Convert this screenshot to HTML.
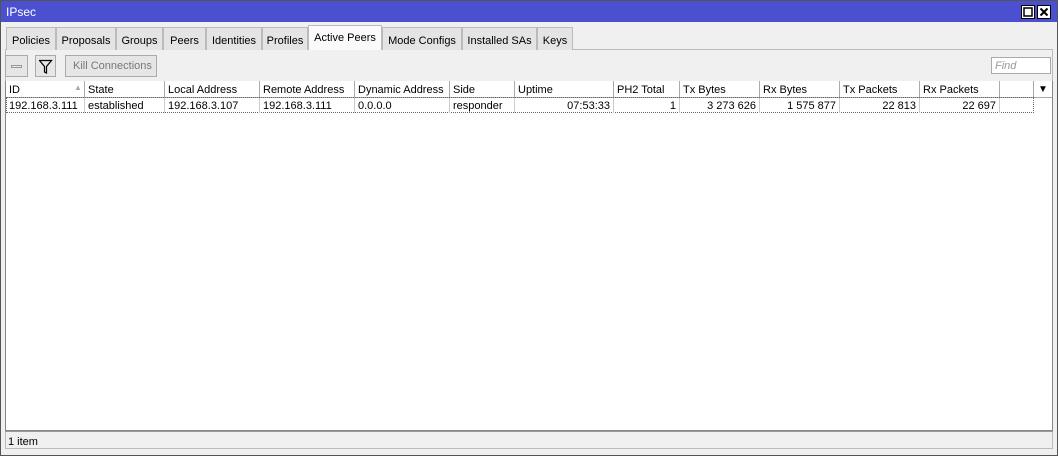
<!DOCTYPE html>
<html><head><style>
*{margin:0;padding:0;box-sizing:border-box}
body{width:1058px;height:456px;background:#f0f0f0;font-family:"Liberation Sans",sans-serif;font-size:11px;color:#000;position:relative;overflow:hidden}
.a{position:absolute}
#win{left:0;top:0;width:1058px;height:456px;border:1px solid #555;background:#f0f0f0}
#title{left:1px;top:1px;width:1056px;height:21px;background:#4b50d0;color:#fff;font-size:12px;padding:4px 0 0 5px}
.wb{top:5px;width:14px;height:14px;border:1px solid #000;background:#fff}
.tab{top:27px;height:23px;border:1px solid #bbb;border-bottom:none;background:#e4e4e4;padding:7px 0 0 0;text-align:center}
.tab.act{top:25px;height:25px;background:#fafafa;padding-top:6px}
#panel{left:5px;top:49px;width:1048px;height:400px;border:1px solid #bbb;background:#f0f0f0}
.btn{top:55px;height:22px;border:1px solid #aaa;background:#e6e6e6}
#grid{left:5px;top:81px;width:1048px;height:350px;border:1px solid #888;background:#fff}
.h{top:81px;height:17px;border-right:1px solid #aaa;border-bottom:1px solid #aaa;padding:3px 0 0 3px;background:#fff}
.c{top:98px;height:15px;padding:2px 3px 0 3px;white-space:nowrap;border-right:1px solid #ccc}
.r{text-align:right}
#row{left:6px;top:97px;width:1028px;height:16px;border:1px dotted #666}
#status{left:5px;top:431px;width:1048px;height:18px;border-top:1px solid #999;padding:4px 0 0 3px}
</style></head><body>
<div id="win" class="a"></div>
<div id="title" class="a">IPsec</div>
<div class="a wb" style="left:1021px"><svg class="a" style="left:1px;top:1px" width="10" height="10"><rect x="1" y="1" width="8" height="8" fill="none" stroke="#000" stroke-width="1.5"/></svg></div>
<div class="a wb" style="left:1037px"><svg class="a" style="left:1px;top:1px" width="10" height="10"><path d="M1.5 1.5L8.5 8.5M8.5 1.5L1.5 8.5" stroke="#000" stroke-width="2"/></svg></div>
<div id="panel" class="a"></div>
<div class="a tab" style="left:6px;width:50px">Policies</div>
<div class="a tab" style="left:56px;width:60px">Proposals</div>
<div class="a tab" style="left:116px;width:47px">Groups</div>
<div class="a tab" style="left:163px;width:43px">Peers</div>
<div class="a tab" style="left:206px;width:56px">Identities</div>
<div class="a tab" style="left:262px;width:46px">Profiles</div>
<div class="a tab act" style="left:308px;width:74px">Active Peers</div>
<div class="a tab" style="left:382px;width:80px">Mode Configs</div>
<div class="a tab" style="left:462px;width:75px">Installed SAs</div>
<div class="a tab" style="left:537px;width:36px">Keys</div>
<div class="a btn" style="left:5px;width:23px"><div class="a" style="left:5px;top:9px;width:11px;height:3px;border:1px solid #999"></div></div>
<div class="a btn" style="left:35px;width:21px"><svg class="a" style="left:3px;top:3px" width="14" height="15"><path d="M0.5 1.5H12.5L7.5 7.5V14L5.5 13V7.5Z" fill="none" stroke="#000" stroke-width="1.2"/></svg></div>
<div class="a btn" style="left:65px;width:92px;color:#777;padding:4px 0 0 7px;white-space:nowrap">Kill Connections</div>
<div class="a" style="left:991px;top:57px;width:60px;height:17px;border:1px solid #aaa;background:#fff;color:#999;font-style:italic;padding:2px 0 0 3px">Find</div>
<div id="grid" class="a"></div>
<div class="a h" style="left:6px;width:79px">ID<span class="a" style="left:68px;top:2px;color:#aaa;font-size:8px">▲</span></div>
<div class="a h" style="left:85px;width:80px">State</div>
<div class="a h" style="left:165px;width:95px">Local Address</div>
<div class="a h" style="left:260px;width:95px">Remote Address</div>
<div class="a h" style="left:355px;width:95px">Dynamic Address</div>
<div class="a h" style="left:450px;width:65px">Side</div>
<div class="a h" style="left:515px;width:99px">Uptime</div>
<div class="a h" style="left:614px;width:66px">PH2 Total</div>
<div class="a h" style="left:680px;width:80px">Tx Bytes</div>
<div class="a h" style="left:760px;width:80px">Rx Bytes</div>
<div class="a h" style="left:840px;width:80px">Tx Packets</div>
<div class="a h" style="left:920px;width:80px">Rx Packets</div>
<div class="a h" style="left:1000px;width:34px"></div>
<div class="a h" style="left:1034px;width:18px;border-right:none;font-size:10px;padding-left:4px">▼</div>
<div id="row" class="a"></div>
<div class="a c" style="left:6px;width:79px">192.168.3.111</div>
<div class="a c" style="left:85px;width:80px">established</div>
<div class="a c" style="left:165px;width:95px">192.168.3.107</div>
<div class="a c" style="left:260px;width:95px">192.168.3.111</div>
<div class="a c" style="left:355px;width:95px">0.0.0.0</div>
<div class="a c" style="left:450px;width:65px">responder</div>
<div class="a c r" style="left:515px;width:99px">07:53:33</div>
<div class="a c r" style="left:614px;width:66px">1</div>
<div class="a c r" style="left:680px;width:80px">3 273 626</div>
<div class="a c r" style="left:760px;width:80px">1 575 877</div>
<div class="a c r" style="left:840px;width:80px">22 813</div>
<div class="a c r" style="left:920px;width:80px">22 697</div>
<div id="status" class="a">1 item</div>
</body></html>
